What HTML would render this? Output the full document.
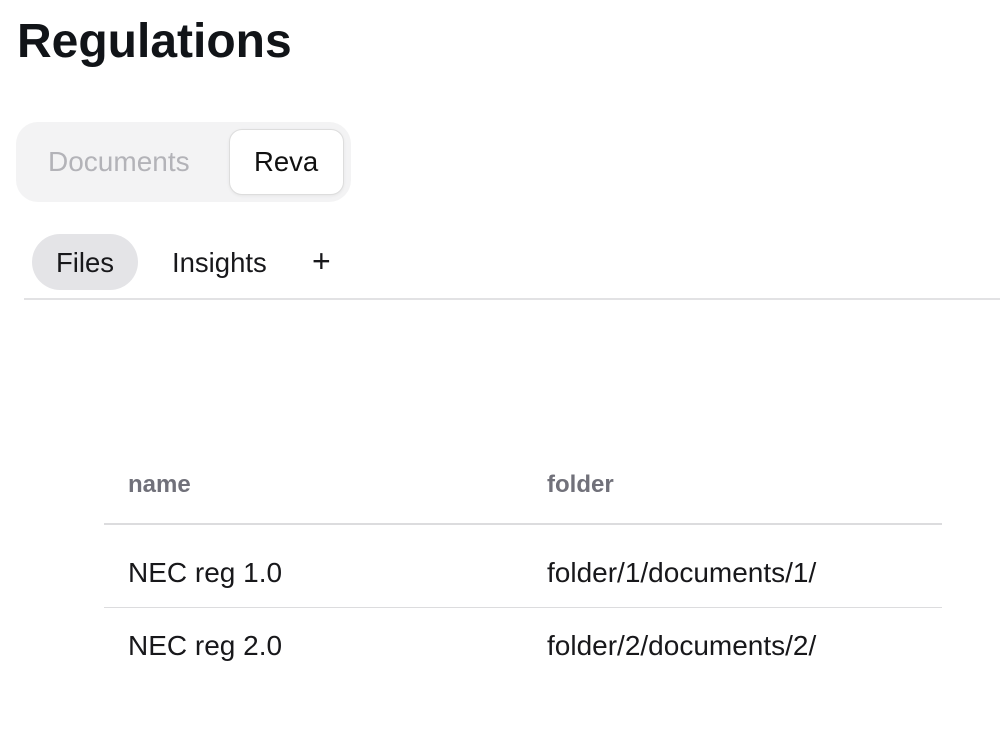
<!DOCTYPE html>
<html><head><style>
body{margin:0;width:1000px;height:744px;background:#fff;font-family:"Liberation Sans",sans-serif;position:relative;overflow:hidden;color:#111}
.a{position:absolute;white-space:nowrap}
</style></head><body>
<div class="a" style="left:17px;top:14px;font-size:48px;font-weight:bold;color:#111418">Regulations</div>
<div class="a" style="left:16px;top:122px;width:335px;height:80px;background:#f3f3f4;border-radius:22px"></div>
<div class="a" style="left:48px;top:146px;font-size:28px;color:#b3b3b8">Documents</div>
<div class="a" style="left:229px;top:129px;width:113px;height:64px;background:#fff;border:1px solid #ddd;border-radius:13px;box-shadow:0 1px 3px rgba(0,0,0,.06)"></div>
<div class="a" style="left:254px;top:146px;font-size:27.5px;color:#111">Reva</div>
<div class="a" style="left:32px;top:234px;width:106px;height:56px;background:#e4e4e7;border-radius:28px"></div>
<div class="a" style="left:56px;top:247px;font-size:27.5px;color:#18181b">Files</div>
<div class="a" style="left:172px;top:247px;font-size:27.5px;color:#18181b">Insights</div>
<div class="a" style="left:312px;top:243px;font-size:32px;color:#18181b">+</div>
<div class="a" style="left:24px;top:298px;width:976px;height:2px;background:#e2e2e4"></div>
<div class="a" style="left:128px;top:471px;font-size:24px;font-weight:bold;color:#71717a">name</div>
<div class="a" style="left:547px;top:471px;font-size:24px;font-weight:bold;color:#71717a">folder</div>
<div class="a" style="left:104px;top:523px;width:838px;height:2px;background:#dcdcde"></div>
<div class="a" style="left:128px;top:557px;font-size:28px;color:#18181b">NEC reg 1.0</div>
<div class="a" style="left:547px;top:557px;font-size:28px;color:#18181b">folder/1/documents/1/</div>
<div class="a" style="left:104px;top:607px;width:838px;height:1px;background:#dcdcde"></div>
<div class="a" style="left:128px;top:630px;font-size:28px;color:#18181b">NEC reg 2.0</div>
<div class="a" style="left:547px;top:630px;font-size:28px;color:#18181b">folder/2/documents/2/</div>
</body></html>
